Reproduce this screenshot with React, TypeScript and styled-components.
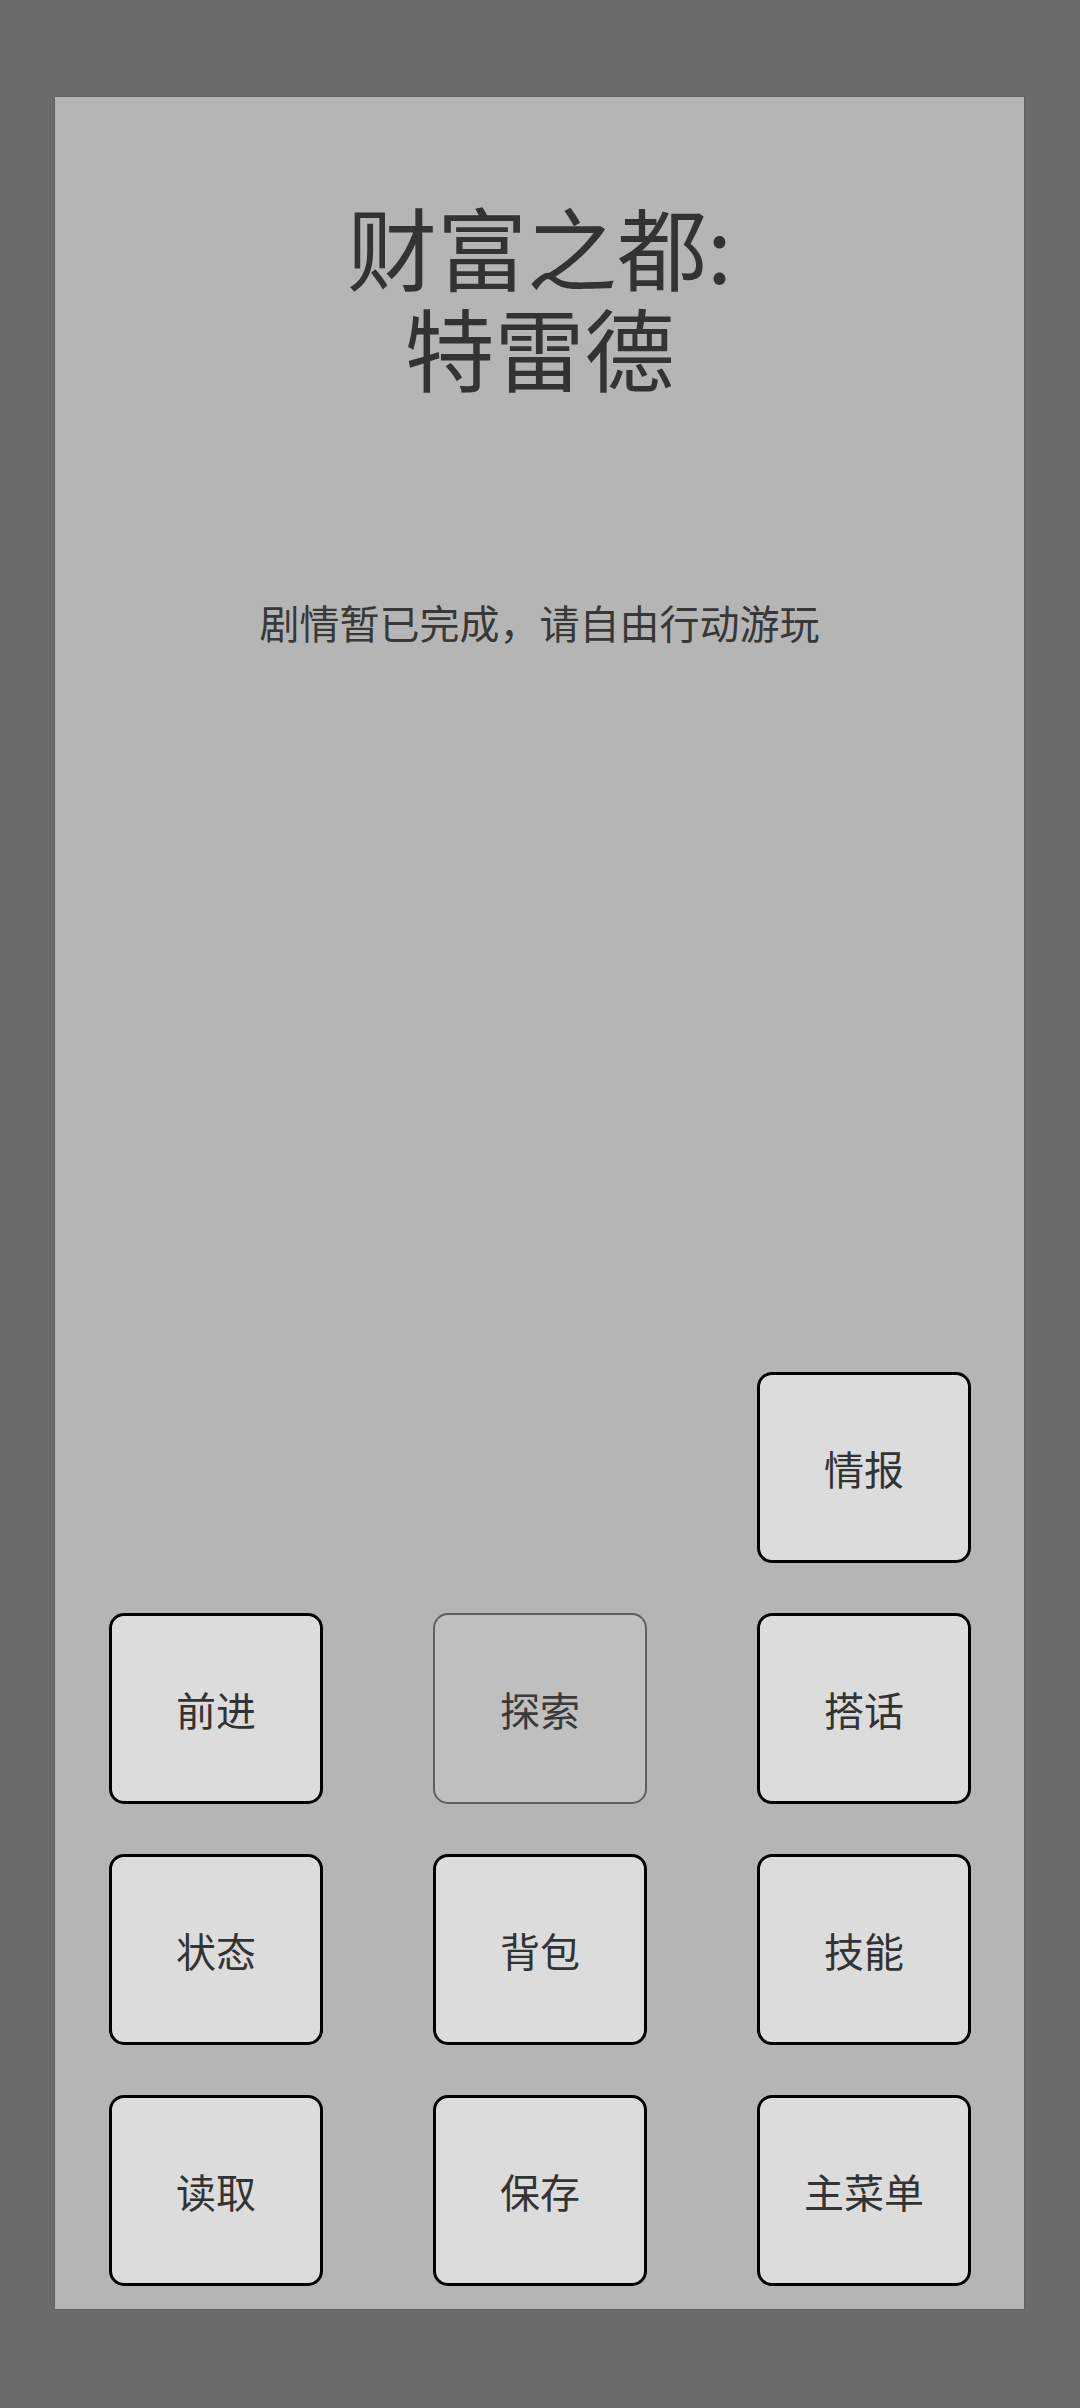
import styled, { createGlobalStyle } from 'styled-components';

const GlobalStyle = createGlobalStyle`
  html, body {
    margin: 0;
    padding: 0;
    background: #6b6b6b;
  }
  body {
    font-family: "Noto Sans CJK SC", "Noto Sans", sans-serif;
  }
`;

const Screen = styled.div`
  width: 1080px;
  height: 2408px;
  box-sizing: border-box;
  padding: 97px 56px 99px 55px;
  display: flex;
`;

const Panel = styled.main`
  flex: 1;
  display: flex;
  flex-direction: column;
  background: #b5b5b5;
  box-shadow: 0 0 2px rgb(0 0 0 / 0.25);
`;

const Title = styled.h1`
  margin: 98px 0 0;
  font-size: 90px;
  line-height: 101px;
  font-weight: 400;
  color: #333;
  text-align: center;
`;

const Subtitle = styled.p`
  margin: 195px 0 0;
  font-size: 40px;
  line-height: 60px;
  color: #383838;
  text-align: center;
`;

const Spacer = styled.div`
  flex: 1;
`;

const ActionGrid = styled.nav`
  display: grid;
  grid-template-columns: repeat(3, 214px);
  grid-auto-rows: 191px;
  justify-content: space-between;
  row-gap: 50px;
  padding: 0 53px 23px 54px;
`;

const ActionButton = styled.button<{ $col?: number }>`
  grid-column: ${(p) => p.$col ?? 'auto'};
  box-sizing: border-box;
  display: flex;
  align-items: center;
  justify-content: center;
  background: #dcdcdc;
  border: 3px solid #000;
  border-radius: 15px;
  padding: 0;
  font-family: inherit;
  font-size: 40px;
  color: #333;
  cursor: pointer;

  &:disabled {
    background: #bfbfbf;
    border: 2.5px solid #5f5f5f;
    color: #3a3a3a;
    cursor: default;
  }
`;

const actions: { label: string; col?: number; disabled?: boolean }[] = [
  { label: '情报', col: 3 },
  { label: '前进' },
  { label: '探索', disabled: true },
  { label: '搭话' },
  { label: '状态' },
  { label: '背包' },
  { label: '技能' },
  { label: '读取' },
  { label: '保存' },
  { label: '主菜单' }
];

export default function App() {
  return (
    <>
      <GlobalStyle />
      <Screen>
        <Panel>
          <Title>
            财富之都:
            <br />
            特雷德
          </Title>
          <Subtitle>剧情暂已完成，请自由行动游玩</Subtitle>
          <Spacer />
          <ActionGrid>
            {actions.map((a) => (
              <ActionButton key={a.label} $col={a.col} disabled={a.disabled}>
                {a.label}
              </ActionButton>
            ))}
          </ActionGrid>
        </Panel>
      </Screen>
    </>
  );
}
